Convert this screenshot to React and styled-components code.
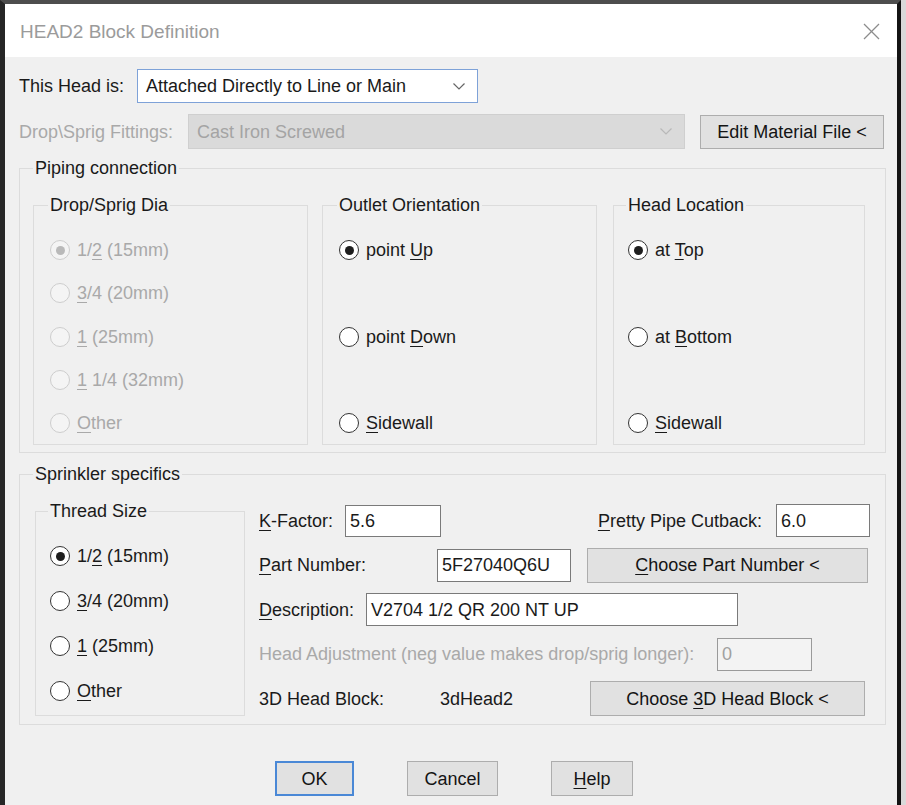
import React from "react";
import styled, {createGlobalStyle, css} from "styled-components";

const GlobalStyle = createGlobalStyle`
  html, body {
    margin: 0;
    padding: 0;
    background: #d9d9d9;
  }
  body {
    font-family: "Liberation Sans", Arial, sans-serif;
  }
`;

const Window = styled.div`
  width: 901px;
  height: 805px;
  box-sizing: border-box;
  border-top: 4px solid #4d4d4d;
  border-left: 5px solid #262626;
  border-right: 4px solid #141414;
  background: #f0f0f0;
  overflow: hidden;
  font-size: 18px;
  line-height: 20px;
  color: #1a1a1a;
`;

const TitleBar = styled.div`
  height: 53px;
  background: #ffffff;
  display: flex;
  align-items: center;
  justify-content: space-between;
  padding: 2px 17px 0 15px;
  box-sizing: border-box;
`;

const Title = styled.div`
  font-size: 19px;
  color: #9b9b9b;
`;

const Body = styled.div`
  padding: 12px 11px 0 14px;
`;

const Row = styled.div`
  display: flex;
  align-items: center;
  height: ${p => p.$h || 35}px;
  margin-top: ${p => p.$mt || 0}px;
`;

const Label = styled.div`
  flex: none;
  width: ${p => (p.$w ? p.$w + "px" : "auto")};
  color: ${p => (p.$disabled ? "#a9a9a9" : "#1a1a1a")};
  white-space: nowrap;
`;

const Combo = styled.div`
  flex: none;
  box-sizing: border-box;
  width: ${p => p.$w}px;
  height: ${p => p.$h || 34}px;
  display: flex;
  align-items: center;
  justify-content: space-between;
  padding: 0 12px 0 8px;
  ${p =>
    p.$disabled
      ? css`
          background: #dadada;
          border: 1px solid #cfcfcf;
          color: #a4a4a4;
        `
      : css`
          background: #ffffff;
          border: 1px solid #7ea2d8;
          color: #1a1a1a;
        `}
`;

const Button = styled.div`
  flex: none;
  box-sizing: border-box;
  width: ${p => p.$w}px;
  height: ${p => p.$h || 35}px;
  margin-left: ${p => p.$ml || 0}px;
  margin-right: ${p => p.$mr || 0}px;
  display: flex;
  align-items: center;
  justify-content: center;
  background: #e1e1e1;
  border: ${p => (p.$default ? "2px solid #4a88d6" : "1px solid #adadad")};
  color: #141414;
  white-space: nowrap;
`;

const Field = styled.div`
  flex: none;
  box-sizing: border-box;
  width: ${p => p.$w}px;
  height: ${p => p.$h || 33}px;
  margin-left: ${p => p.$ml || 0}px;
  display: flex;
  align-items: center;
  padding-left: 4px;
  background: ${p => (p.$disabled ? "#f3f3f3" : "#ffffff")};
  border: 1px solid ${p => (p.$disabled ? "#9a9a9a" : "#7a7a7a")};
  color: ${p => (p.$disabled ? "#a0a0a0" : "#1a1a1a")};
  white-space: nowrap;
`;

const Group = styled.fieldset`
  margin: ${p => p.$mt || 0}px 0 0 0;
  min-width: 0;
  width: ${p => (p.$w ? p.$w + "px" : "auto")};
  box-sizing: border-box;
  border: 1px solid #dcdcdc;
  padding: ${p => p.$pad};
`;

const Legend = styled.legend`
  padding: 0 2px;
  margin-left: ${p => p.$ml ?? -2}px;
  line-height: 20px;
  color: #1a1a1a;
`;

const PipingGrid = styled.div`
  display: grid;
  grid-template-columns: 275px 275px 254px;
  column-gap: 14px;
  & > :nth-child(3) {
    margin-left: 2px;
  }
`;

const SprinklerRow = styled.div`
  display: flex;
  align-items: flex-start;
  gap: 14px;
`;

const RadioList = styled.div`
  height: ${p => p.$h}px;
  display: flex;
  flex-direction: column;
  justify-content: space-between;
`;

const RadioItem = styled.div`
  display: flex;
  align-items: center;
  gap: 7px;
  height: 20px;
  white-space: nowrap;
  color: ${p => (p.$disabled ? "#a9a9a9" : "#1a1a1a")};
`;

const RadioDot = styled.span`
  flex: none;
  box-sizing: border-box;
  width: 20px;
  height: 20px;
  border-radius: 50%;
  border: 1.5px solid ${p => (p.$disabled ? "#cdcdcd" : "#333333")};
  background: ${p => (p.$disabled ? "#f4f4f4" : "#ffffff")};
  display: flex;
  align-items: center;
  justify-content: center;
  &::after {
    content: "";
    width: 9px;
    height: 9px;
    border-radius: 50%;
    background: ${p => (p.$disabled ? "#b9b9b9" : "#1e1e1e")};
    display: ${p => (p.$checked ? "block" : "none")};
  }
`;

const Key = styled.u`
  text-decoration-thickness: 1px;
  text-underline-offset: 3px;
`;

const Specs = styled.div`
  width: 611px;
  margin-top: 2px;
  display: flex;
  flex-direction: column;
  gap: 9.5px;
`;

const Spacer = styled.div`
  flex: 1;
`;

const Footer = styled.div`
  display: flex;
  justify-content: center;
  gap: 53px;
  margin-top: 36px;
  padding-left: 3px;
`;

const Chevron = ({color}) => (
  <svg width="12" height="7" viewBox="0 0 12 7">
    <polyline points="0.5,0.5 6,6 11.5,0.5" fill="none" stroke={color} strokeWidth="1.2"/>
  </svg>
);

const CloseIcon = () => (
  <svg width="17" height="17" viewBox="0 0 17 17">
    <line x1="1" y1="1" x2="16" y2="16" stroke="#8c8c8c" strokeWidth="1.2"/>
    <line x1="16" y1="1" x2="1" y2="16" stroke="#8c8c8c" strokeWidth="1.2"/>
  </svg>
);

const Radio = ({checked, disabled, children}) => (
  <RadioItem $disabled={disabled}>
    <RadioDot $checked={checked} $disabled={disabled}/>
    <span>{children}</span>
  </RadioItem>
);

const dropSizes = [
  <>1/<Key>2</Key> (15mm)</>,
  <><Key>3</Key>/4 (20mm)</>,
  <><Key>1</Key> (25mm)</>,
  <><Key>1</Key> 1/4 (32mm)</>,
  <><Key>O</Key>ther</>,
];

const threadSizes = [
  <>1/<Key>2</Key> (15mm)</>,
  <><Key>3</Key>/4 (20mm)</>,
  <><Key>1</Key> (25mm)</>,
  <><Key>O</Key>ther</>,
];

export default function App() {
  return (
    <>
      <GlobalStyle/>
      <Window>
        <TitleBar>
          <Title>HEAD2 Block Definition</Title>
          <CloseIcon/>
        </TitleBar>
        <Body>
          <Row $h={34}>
            <Label $w={118}>This Head is:</Label>
            <Combo $w={341}>
              <span>Attached Directly to Line or Main</span>
              <Chevron color="#666"/>
            </Combo>
          </Row>
          <Row $h={37} $mt={10}>
            <Label $w={169} $disabled>{"Drop\\Sprig Fittings:"}</Label>
            <Combo $w={497} $h={35} $disabled>
              <span>Cast Iron Screwed</span>
              <Chevron color="#b8b8b8"/>
            </Combo>
            <Spacer/>
            <Button $w={184} $h={34} $mr={2}>Edit Material File &lt;</Button>
          </Row>

          <Group $mt={8} $pad="17px 18px 7px 13px">
            <Legend $ml={0}>Piping connection</Legend>
            <PipingGrid>
              <Group $pad="25px 10px 11px 16px">
                <Legend>Drop/Sprig Dia</Legend>
                <RadioList $h={193}>
                  {dropSizes.map((s, i) => (
                    <Radio key={i} checked={i === 0} disabled>{s}</Radio>
                  ))}
                </RadioList>
              </Group>
              <Group $pad="25px 10px 11px 16px">
                <Legend>Outlet Orientation</Legend>
                <RadioList $h={193}>
                  <Radio checked>point <Key>U</Key>p</Radio>
                  <Radio>point <Key>D</Key>own</Radio>
                  <Radio><Key>S</Key>idewall</Radio>
                </RadioList>
              </Group>
              <Group $pad="25px 10px 11px 14px">
                <Legend>Head Location</Legend>
                <RadioList $h={193}>
                  <Radio checked>at <Key>T</Key>op</Radio>
                  <Radio>at <Key>B</Key>ottom</Radio>
                  <Radio><Key>S</Key>idewall</Radio>
                </RadioList>
              </Group>
            </PipingGrid>
          </Group>

          <Group $mt={11} $pad="17px 15px 8px 15px">
            <Legend>Sprinkler specifics</Legend>
            <SprinklerRow>
              <Group $w={210} $pad="25px 10px 14px 14px">
                <Legend>Thread Size</Legend>
                <RadioList $h={155}>
                  {threadSizes.map((s, i) => (
                    <Radio key={i} checked={i === 0}>{s}</Radio>
                  ))}
                </RadioList>
              </Group>
              <Specs>
                <Row>
                  <Label $w={86}><Key>K</Key>-Factor:</Label>
                  <Field $w={96} $h={32}>5.6</Field>
                  <Spacer/>
                  <Label><Key>P</Key>retty Pipe Cutback:</Label>
                  <Field $w={94} $ml={14}>6.0</Field>
                </Row>
                <Row>
                  <Label $w={178}><Key>P</Key>art Number:</Label>
                  <Field $w={134}>5F27040Q6U</Field>
                  <Button $w={281} $ml={16}><span><Key>C</Key>hoose Part Number &lt;</span></Button>
                </Row>
                <Row>
                  <Label $w={107}><Key>D</Key>escription:</Label>
                  <Field $w={372}>V2704 1/2 QR 200 NT UP</Field>
                </Row>
                <Row>
                  <Label $w={458} $disabled>Head Adjustment (neg value makes drop/sprig longer):</Label>
                  <Field $w={95} $disabled>0</Field>
                </Row>
                <Row>
                  <Label $w={181}>3D Head Block:</Label>
                  <Label $w={150}>3dHead2</Label>
                  <Button $w={275}><span>Choose <Key>3</Key>D Head Block &lt;</span></Button>
                </Row>
              </Specs>
            </SprinklerRow>
          </Group>

          <Footer>
            <Button $w={79} $default>OK</Button>
            <Button $w={91}>Cancel</Button>
            <Button $w={82}><span><Key>H</Key>elp</span></Button>
          </Footer>
        </Body>
      </Window>
    </>
  );
}
